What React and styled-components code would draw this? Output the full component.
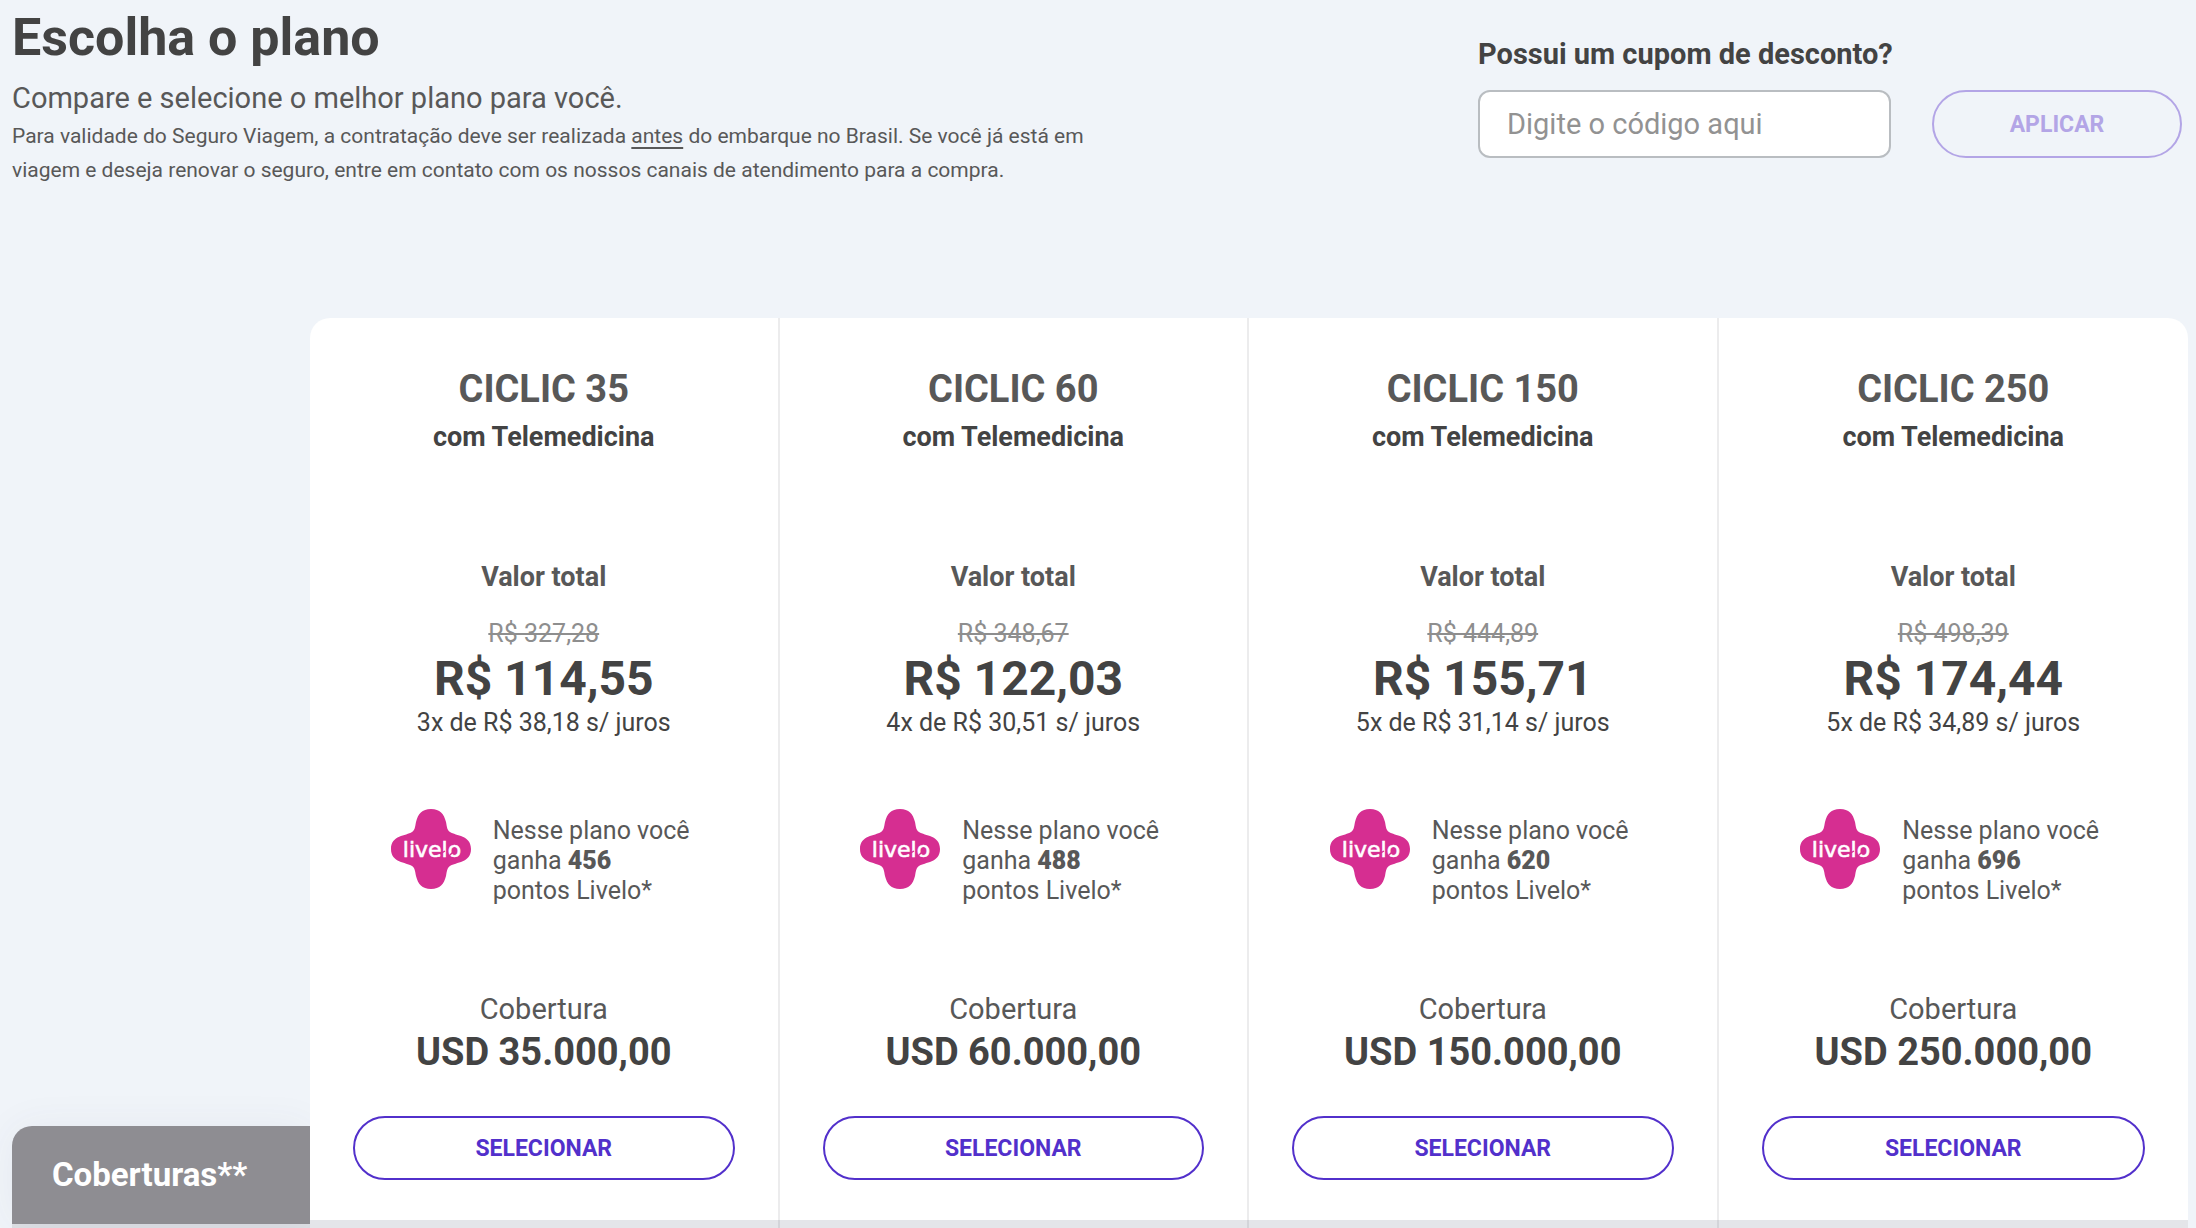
import { useState } from "react";
import styled, { createGlobalStyle } from "styled-components";

const plans = [
  { id: 35, name: "CICLIC 35", old: "R$ 327,28", price: "R$ 114,55", parcels: "3x de R$ 38,18 s/ juros", points: 456, coverage: "USD 35.000,00" },
  { id: 60, name: "CICLIC 60", old: "R$ 348,67", price: "R$ 122,03", parcels: "4x de R$ 30,51 s/ juros", points: 488, coverage: "USD 60.000,00" },
  { id: 150, name: "CICLIC 150", old: "R$ 444,89", price: "R$ 155,71", parcels: "5x de R$ 31,14 s/ juros", points: 620, coverage: "USD 150.000,00" },
  { id: 250, name: "CICLIC 250", old: "R$ 498,39", price: "R$ 174,44", parcels: "5x de R$ 34,89 s/ juros", points: 696, coverage: "USD 250.000,00" },
];

const LiveloLogo = () => (
  <svg width="80" height="80" viewBox="0 0 80 80" role="img" aria-label="Livelo">
    <path
      fill="#d62e91"
      d="M40 0C49 0 53 5 55 13C56 18 56 21 59 23C65 27 80 26 80 40C80 54 65 53 59 57C56 59 56 62 55 67C53 75 49 80 40 80C31 80 27 75 25 67C24 62 24 59 21 57C15 53 0 54 0 40C0 26 15 27 21 23C24 21 24 18 25 13C27 5 31 0 40 0Z"
    />
    <text
      x="41"
      y="48"
      textAnchor="middle"
      fill="#fff"
      stroke="#fff"
      strokeWidth="0.6"
      fontFamily="DejaVu Sans, sans-serif"
      fontSize="22"
    >
      livelo
    </text>
    <path d="M49 45L54 42M58 47L62 43M67 35L70 39" stroke="#d62e91" strokeWidth="1.4" />
  </svg>
);

const PlanCard = ({ plan }) => (
  <Card>
    <PlanName>{plan.name}</PlanName>
    <PlanExtra>com Telemedicina</PlanExtra>
    <TotalLabel>Valor total</TotalLabel>
    <OldPrice>{plan.old}</OldPrice>
    <Price>{plan.price}</Price>
    <Parcels>{plan.parcels}</Parcels>
    <Points>
      <LiveloLogo />
      <p>
        Nesse plano você
        <br />
        ganha <strong>{plan.points}</strong>
        <br />
        pontos Livelo*
      </p>
    </Points>
    <CoverageLabel>Cobertura</CoverageLabel>
    <Coverage>{plan.coverage}</Coverage>
    <SelectButton type="button">SELECIONAR</SelectButton>
  </Card>
);

const App = () => {
  const [coupon, setCoupon] = useState("");

  return (
    <Page>
      <GlobalStyle />
      <Header>
        <Intro>
          <h1>Escolha o plano</h1>
          <h2>Compare e selecione o melhor plano para você.</h2>
          <p>
            Para validade do Seguro Viagem, a contratação deve ser realizada <u>antes</u> do embarque no Brasil. Se você já está em
            viagem e deseja renovar o seguro, entre em contato com os nossos canais de atendimento para a compra.
          </p>
        </Intro>
        <Coupon onSubmit={(e) => e.preventDefault()}>
          <label htmlFor="coupon">Possui um cupom de desconto?</label>
          <CouponRow>
            <CouponInput
              id="coupon"
              placeholder="Digite o código aqui"
              value={coupon}
              onChange={(e) => setCoupon(e.target.value)}
            />
            <ApplyButton type="submit" disabled={!coupon}>
              APLICAR
            </ApplyButton>
          </CouponRow>
        </Coupon>
      </Header>
      <Plans>
        <Sidebar>
          <SidebarTitle>Coberturas**</SidebarTitle>
        </Sidebar>
        <Cards>
          {plans.map((plan) => (
            <PlanCard key={plan.id} plan={plan} />
          ))}
        </Cards>
      </Plans>
    </Page>
  );
};

const GlobalStyle = createGlobalStyle`
  * {
    box-sizing: border-box;
  }
  body {
    margin: 0;
    background-color: #f0f4f9;
    font-family: Roboto, "Liberation Sans", sans-serif;
    color: #585858;
  }
  h1, h2, h3, p {
    margin: 0;
  }
  button, input {
    font-family: inherit;
  }
`;

const Page = styled.main`
  min-height: 100vh;
  padding: 0 8px 0 12px;
`;

const Header = styled.header`
  display: flex;
  justify-content: space-between;
  min-height: 318px;
  padding-right: 6px;
`;

const Intro = styled.div`
  max-width: 1100px;
  padding-top: 8px;

  h1 {
    color: #434343;
    font-size: 52px;
    line-height: 60px;
    font-weight: 700;
  }
  h2 {
    padding-top: 9px;
    font-size: 29px;
    line-height: 42px;
    font-weight: 400;
  }
  p {
    font-size: 21px;
    line-height: 34px;
  }
  u {
    text-underline-offset: 4px;
  }
`;

const Coupon = styled.form`
  width: 704px;
  padding-top: 34px;

  label {
    display: block;
    color: #434343;
    font-size: 29px;
    line-height: 40px;
    font-weight: 700;
  }
`;

const CouponRow = styled.div`
  display: flex;
  align-items: center;
  gap: 41px;
  padding-top: 16px;
`;

const CouponInput = styled.input`
  flex: 1;
  min-width: 0;
  height: 68px;
  padding: 0 27px;
  border: 2px solid #b9bdc1;
  border-radius: 12px;
  background-color: #fff;
  color: #434343;
  font-size: 29px;

  &::placeholder {
    color: #929292;
    opacity: 1;
  }
`;

const PillButton = styled.button`
  border: 2px solid currentColor;
  border-radius: 34px;
  background-color: transparent;
  font-size: 23px;
  font-weight: 700;
  cursor: pointer;
`;

const ApplyButton = styled(PillButton)`
  width: 250px;
  height: 68px;
  color: #5230cb;

  &:disabled {
    color: #b3a5e6;
    cursor: default;
  }
`;

const SelectButton = styled(PillButton)`
  height: 64px;
  margin: 40px 43px;
  color: #5230cb;
`;

const Plans = styled.section`
  display: grid;
  grid-template-columns: 298px 1fr;
`;

const Sidebar = styled.aside`
  display: flex;
  flex-direction: column;
  justify-content: flex-end;
  border-bottom: 4px solid #dddfe4;
`;

const SidebarTitle = styled.h2`
  padding: 25px 40px;
  border-radius: 20px 0 0 0;
  background-color: #8e8d92;
  box-shadow: 0 0 40px rgba(60, 60, 100, 0.06);
  color: #fff;
  font-size: 33px;
  line-height: 48px;
  font-weight: 700;
`;

const Cards = styled.div`
  position: relative;
  display: grid;
  grid-template-columns: repeat(4, 1fr);
  overflow: hidden;
  border-radius: 20px 20px 0 0;
  background: linear-gradient(#e4e5e9, #e4e5e9) bottom / 100% 8px no-repeat #fff;
`;

const Card = styled.article`
  display: flex;
  flex-direction: column;
  padding: 47px 0 8px;
  border-right: 2px solid rgba(40, 40, 60, 0.09);
  text-align: center;

  &:last-child {
    border-right: 0;
  }
`;

const PlanName = styled.h3`
  font-size: 38px;
  line-height: 48px;
  font-weight: 700;
`;

const PlanExtra = styled.p`
  padding-top: 4px;
  color: #434343;
  font-size: 27px;
  line-height: 40px;
  font-weight: 700;
`;

const TotalLabel = styled.p`
  padding-top: 100px;
  font-size: 27px;
  line-height: 40px;
  font-weight: 700;
`;

const OldPrice = styled.s`
  padding-top: 21px;
  color: #8e8e8e;
  font-size: 25px;
  line-height: 32px;
`;

const Price = styled.strong`
  padding-top: 1px;
  color: #434343;
  font-size: 48px;
  line-height: 56px;
`;

const Parcels = styled.p`
  color: #434343;
  font-size: 25px;
  line-height: 32px;
`;

const Points = styled.div`
  display: flex;
  justify-content: center;
  gap: 22px;
  padding-top: 70px;

  p {
    width: 204px;
    padding-top: 7px;
    font-size: 25px;
    line-height: 30px;
    text-align: left;
  }
  strong {
    font-weight: 900;
  }
`;

const CoverageLabel = styled.p`
  padding-top: 85px;
  font-size: 29px;
  line-height: 36px;
`;

const Coverage = styled.strong`
  padding-top: 1px;
  color: #434343;
  font-size: 38px;
  line-height: 48px;
`;

export default App;
